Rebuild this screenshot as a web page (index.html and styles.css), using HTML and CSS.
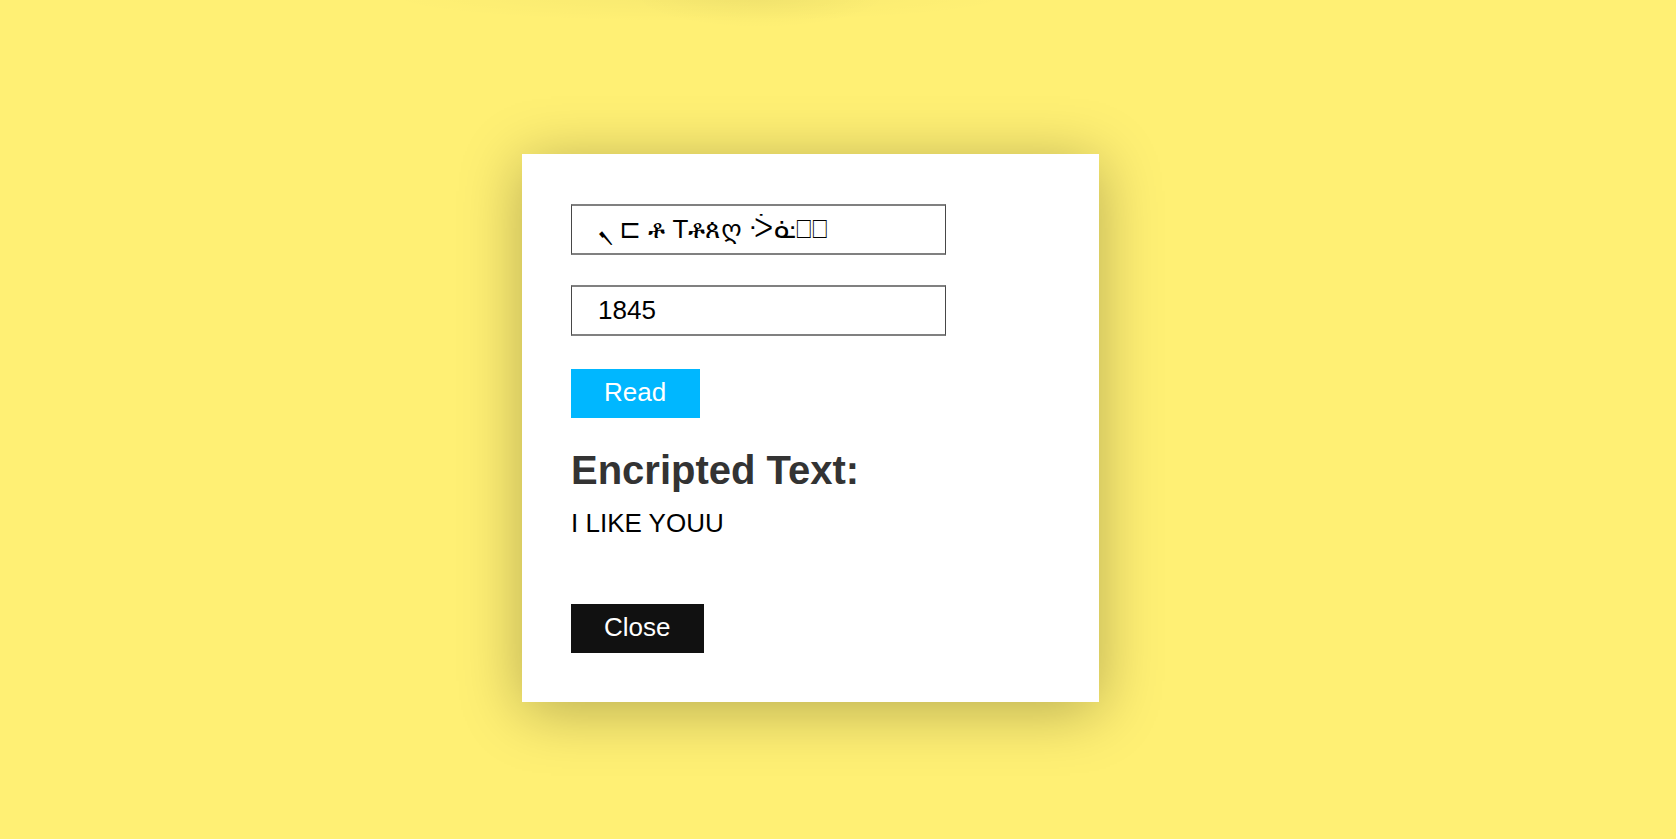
FILE: index.html
```html
<!DOCTYPE html>
<html lang="en">
<head>
<meta charset="utf-8">
<title>Read message</title>
<link rel="stylesheet" href="styles.css">
</head>
<body>
<main class="page">
  <section class="card">
    <form class="form">
      <input class="field" type="text" aria-label="Message" value="ܢ ⊏ ቶ Tቶጰღ ᑂᓎ⎕⎕">
      <input class="field" type="text" aria-label="Key" value="1845">
      <button class="button button-read" type="button">Read</button>
    </form>
    <h2 class="title">Encripted Text:</h2>
    <p class="result">I LIKE YOUU</p>
    <button class="button button-close" type="button">Close</button>
  </section>
</main>
</body>
</html>
```
FILE: styles.css
```css
* {
  box-sizing: border-box;
}

body {
  margin: 0;
  background: #fff074;
  color: #000;
  font-family: "Liberation Sans", "DejaVu Sans", "Noto Sans", sans-serif;
  font-size: 26px;
  line-height: 30px;
}

.page {
  display: flex;
  justify-content: center;
  align-items: center;
  min-height: 100vh;
  padding: 17px 55px 0 0;
  background:
    radial-gradient(ellipse 130px 36px at 760px -8px, rgba(0, 0, 0, 0.04), transparent),
    radial-gradient(ellipse 320px 26px at 700px -4px, rgba(0, 0, 0, 0.03), transparent);
}

.card {
  width: 100%;
  max-width: 577px;
  padding: 50px 49px 49px;
  background: #fff;
  box-shadow: 0 8px 58px rgba(0, 0, 0, 0.29);
}

.form {
  display: flex;
  flex-direction: column;
  align-items: flex-start;
}

.field {
  width: 100%;
  max-width: 375px;
  height: 51px;
  margin: 0 0 30px;
  padding: 0 26px;
  border: solid;
  border-width: 2px 1px;
  border-color: #808080 #484848;
  border-radius: 0;
  background: #fff;
  color: #000;
  font: inherit;
}

.button {
  height: 49px;
  padding: 0 34px 4px 33px;
  border: 0;
  color: #fff;
  font: inherit;
}

.button-read {
  margin-top: 3px;
  background: #00b7ff;
}

.button-close {
  display: block;
  background: #111;
}

.title {
  margin: 29px 0 15px;
  color: #333;
  font-size: 40px;
  line-height: 46px;
}

.result {
  margin: 0 0 66px;
}
```
